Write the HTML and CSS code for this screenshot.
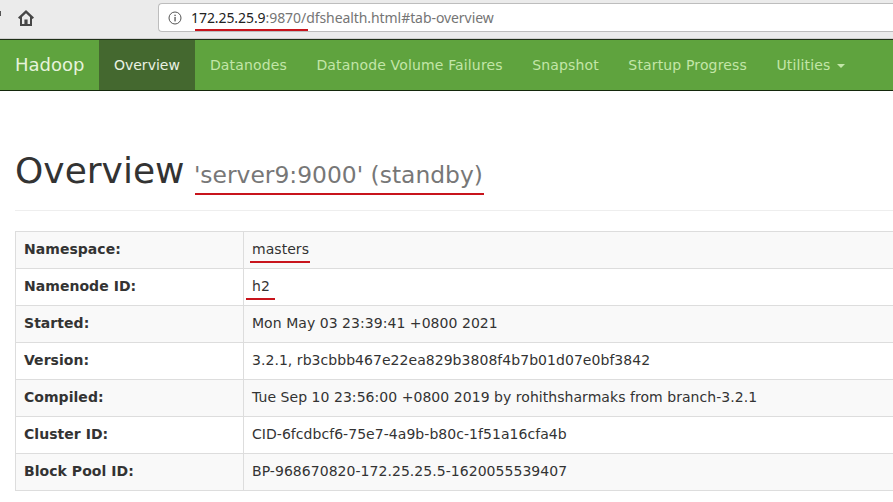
FILE: index.html
```html
<!DOCTYPE html>
<html lang="en">
<head>
    <meta charset="UTF-8">
    <title>Namenode information</title>
    <link rel="stylesheet" href="styles.css">
</head>
<body>
    <!-- browser toolbar -->
    <div class="toolbar">
        <div class="reload-edge"></div>
        <svg class="home-icon" width="18" height="18" viewBox="0 0 18 18">
            <path fill-rule="evenodd" fill="#464646" d="M9 1 L17 8.6 L15.6 10 L15 9.4 V17 H3 V9.4 L2.4 10 L1 8.6 Z M9 4.2 L5 8 V15 H7.4 V10.6 H10.6 V15 H13 V8 Z"/>
        </svg>
        <div class="url-box">
            <svg class="info-icon" width="14" height="14" viewBox="0 0 14 14">
                <circle cx="7" cy="7" r="6" fill="none" stroke="#555" stroke-width="1"/>
                <rect x="6.4" y="6" width="1.3" height="4.4" fill="#555"/>
                <rect x="6.4" y="3.7" width="1.3" height="1.4" fill="#555"/>
            </svg>
            <span class="url"><span class="url-host">172.25.25.9</span>:9870/dfshealth.html#tab-overview</span>
        </div>
    </div>

    <nav class="navbar">
        <a class="brand" href="#">Hadoop</a>
        <a class="nav-link active" href="#">Overview</a>
        <a class="nav-link" href="#">Datanodes</a>
        <a class="nav-link" href="#">Datanode Volume Failures</a>
        <a class="nav-link" href="#">Snapshot</a>
        <a class="nav-link" href="#">Startup Progress</a>
        <a class="nav-link" href="#">Utilities <span class="caret"></span></a>
    </nav>

    <div class="container">
        <div class="page-header">
            <h1>Overview <small>'server9:9000' (standby)</small></h1>
        </div>

        <table class="info-table">
            <tr><th>Namespace:</th><td>masters</td></tr>
            <tr><th>Namenode ID:</th><td>h2</td></tr>
            <tr><th>Started:</th><td>Mon May 03 23:39:41 +0800 2021</td></tr>
            <tr><th>Version:</th><td>3.2.1, rb3cbbb467e22ea829b3808f4b7b01d07e0bf3842</td></tr>
            <tr><th>Compiled:</th><td>Tue Sep 10 23:56:00 +0800 2019 by rohithsharmaks from branch-3.2.1</td></tr>
            <tr><th>Cluster ID:</th><td>CID-6fcdbcf6-75e7-4a9b-b80c-1f51a16cfa4b</td></tr>
            <tr><th>Block Pool ID:</th><td>BP-968670820-172.25.25.5-1620055539407</td></tr>
        </table>
    </div>

    <!-- red marks drawn over the screenshot -->
    <div class="mark mark-url"></div>
    <div class="mark mark-title"></div>
    <div class="mark mark-namespace"></div>
    <div class="mark mark-nnid"></div>
</body>
</html>
```

FILE: styles.css
```css
html, body {
    margin: 0;
    padding: 0;
}

body {
    width: 893px;
    height: 502px;
    overflow: hidden;
    position: relative;
    background: #fff;
    font-family: "DejaVu Sans", sans-serif;
    font-size: 14px;
    color: #333;
}

.toolbar {
    height: 39px;
    box-sizing: border-box;
    background: #ebebeb;
    border-bottom: 1px solid #d0d0d0;
    display: flex;
    align-items: flex-start;
    padding: 9px 0 0 0;
}

.reload-edge {
    flex: none;
    width: 1px;
    height: 5px;
    margin: 2px 16px 0 0;
    background: #555;
}

.home-icon {
    flex: none;
}

.url-box {
    margin: -6px 0 0 123px;
    flex: 1;
    height: 29px;
    box-sizing: border-box;
    background: #fff;
    border: 1px solid #bdbdbd;
    border-right: none;
    border-radius: 4px 0 0 4px;
    display: flex;
    align-items: center;
    padding-left: 9px;
}

.info-icon {
    flex: none;
}

.url {
    margin-left: 9px;
    font-family: "Noto Sans", sans-serif;
    font-size: 14px;
    letter-spacing: -0.07px;
    color: #757575;
}

.url-host {
    color: #222;
}

.navbar {
    height: 52px;
    box-sizing: border-box;
    background: #5fa33e;
    border-top: 1px solid #1f2f17;
    border-bottom: 1px solid #14280c;
    display: flex;
}

.brand {
    padding: 0 15px;
    line-height: 50px;
    font-size: 18px;
    color: #e6f3dc;
    text-decoration: none;
}

.nav-link {
    padding: 0 15px 0 14.5px;
    line-height: 50px;
    color: #c3e6a8;
    text-decoration: none;
    white-space: nowrap;
    letter-spacing: 0.15px;
}

.nav-link.active {
    padding: 0 15.5px 0 14.5px;
    background: #44682f;
    color: #eaf2e3;
    letter-spacing: 0;
}

.caret {
    display: inline-block;
    margin-left: 2px;
    vertical-align: middle;
    border-top: 4px solid #c3e6a8;
    border-left: 4px solid transparent;
    border-right: 4px solid transparent;
}

.container {
    padding: 0 0 0 15px;
}

.page-header {
    margin-top: 60px;
    padding-bottom: 5px;
    border-bottom: 1px solid #eee;
    margin-bottom: 20px;
}

h1 {
    margin: 20px 0 10px;
    font-size: 36px;
    font-weight: 500;
    line-height: 40px;
    color: #333;
}

small {
    margin-left: -2px;
    font-size: 23.4px;
    font-weight: 400;
    color: #777;
}

.info-table {
    width: 100%;
    border-collapse: collapse;
    background: #fff;
}

.info-table th,
.info-table td {
    height: 34px;
    padding: 0 8px 2px;
    border: 1px solid #ddd;
    text-align: left;
    line-height: 20px;
    letter-spacing: 0.045px;
}

.info-table td {
    border-right: none;
}

.info-table th {
    width: 211px;
}

.info-table tr:nth-child(odd) th,
.info-table tr:nth-child(odd) td {
    background: #f9f9f9;
}

.mark {
    position: absolute;
    height: 2px;
    background: #c8141c;
}

.mark-url {
    left: 195px;
    top: 29px;
    width: 113px;
}

.mark-title {
    left: 195px;
    top: 193px;
    width: 289px;
}

.mark-namespace {
    left: 250px;
    top: 261px;
    width: 60px;
}

.mark-nnid {
    left: 246px;
    top: 298px;
    width: 29px;
}
```
